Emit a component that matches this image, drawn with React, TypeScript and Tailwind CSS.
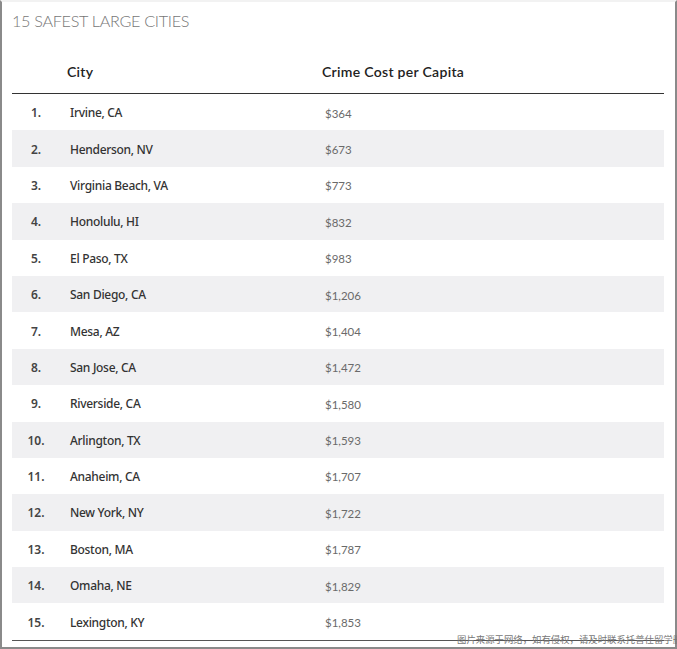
const rows: [string, string][] = [
  ['Irvine, CA', '$364'],
  ['Henderson, NV', '$673'],
  ['Virginia Beach, VA', '$773'],
  ['Honolulu, HI', '$832'],
  ['El Paso, TX', '$983'],
  ['San Diego, CA', '$1,206'],
  ['Mesa, AZ', '$1,404'],
  ['San Jose, CA', '$1,472'],
  ['Riverside, CA', '$1,580'],
  ['Arlington, TX', '$1,593'],
  ['Anaheim, CA', '$1,707'],
  ['New York, NY', '$1,722'],
  ['Boston, MA', '$1,787'],
  ['Omaha, NE', '$1,829'],
  ['Lexington, KY', '$1,853'],
]

export default function App() {
  return (
    <div className="w-[677px] h-[649px] bg-white overflow-hidden">
      <div className="relative h-full border-l-2 border-r-2 border-b-2 border-[#8a8a8a] border-t-2 border-t-[#f2f2f2] pl-[10px] pr-[11px]">
        <h1 className="pt-[7px] h-[52px] text-[16.2px] font-light text-[#777] tracking-[-0.3px] font-['Lato',sans-serif]">
          15 SAFEST LARGE CITIES
        </h1>
        <div className="flex h-[40px] items-start pt-[7px] border-b border-[#333] text-[14px] font-semibold text-[#222] font-['Lato',sans-serif] tracking-[0.3px]">
          <div className="w-[55px]" />
          <div className="w-[255px]">City</div>
          <div>Crime Cost per Capita</div>
        </div>
        <div className="border-b border-[#555]">
          {rows.map(([city, cost], i) => (
            <div
              key={city}
              className={`flex items-center pt-[2px] h-[36.4px] ${i % 2 === 1 ? 'bg-[#f0f0f2]' : ''}`}
            >
              <div className="w-[48px] text-center text-[12px] font-semibold text-[#444] font-['Noto_Sans',sans-serif]">
                {i + 1}.
              </div>
              <div className="w-[265px] pl-[10px] text-[12px] font-medium text-[#333] font-['Noto_Sans',sans-serif] tracking-[-0.3px]">
                {city}
              </div>
              <div className="text-[11.5px] text-[#6a6a6a] font-['Lato',sans-serif]">{cost}</div>
            </div>
          ))}
        </div>
        <div className="absolute left-[455px] bottom-[1px] text-[9.4px] text-[#777] whitespace-nowrap font-['Noto_Sans_CJK_SC',sans-serif]">
          图片来源于网络，如有侵权，请及时联系托普仕留学删除
        </div>
      </div>
    </div>
  )
}
